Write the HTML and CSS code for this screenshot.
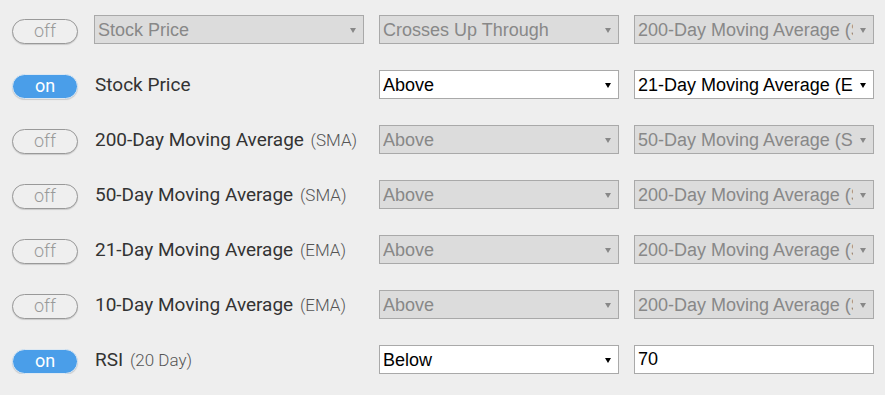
FILE: index.html
```html
<!DOCTYPE html>
<html lang="en">
<head>
    <meta charset="UTF-8">
    <title>Screener rules</title>
    <link rel="stylesheet" href="styles.css">
</head>
<body>
    <div class="rules">
        <div class="rule">
            <button class="toggle">off</button>
            <div class="pick"><select disabled><option>Stock Price</option></select></div>
            <div class="pick"><select disabled><option>Crosses Up Through</option></select></div>
            <div class="pick"><select disabled><option>200-Day Moving Average (SMA)</option></select></div>
        </div>

        <div class="rule">
            <button class="toggle on">on</button>
            <div class="label">Stock Price</div>
            <div class="pick"><select><option>Above</option></select></div>
            <div class="pick"><select><option>21-Day Moving Average (EMA)</option></select></div>
        </div>

        <div class="rule">
            <button class="toggle">off</button>
            <div class="label">200-Day Moving Average <span class="note">(SMA)</span></div>
            <div class="pick"><select disabled><option>Above</option></select></div>
            <div class="pick"><select disabled><option>50-Day Moving Average (SMA)</option></select></div>
        </div>

        <div class="rule">
            <button class="toggle">off</button>
            <div class="label">50-Day Moving Average <span class="note">(SMA)</span></div>
            <div class="pick"><select disabled><option>Above</option></select></div>
            <div class="pick"><select disabled><option>200-Day Moving Average (SMA)</option></select></div>
        </div>

        <div class="rule">
            <button class="toggle">off</button>
            <div class="label">21-Day Moving Average <span class="note">(EMA)</span></div>
            <div class="pick"><select disabled><option>Above</option></select></div>
            <div class="pick"><select disabled><option>200-Day Moving Average (SMA)</option></select></div>
        </div>

        <div class="rule">
            <button class="toggle">off</button>
            <div class="label">10-Day Moving Average <span class="note">(EMA)</span></div>
            <div class="pick"><select disabled><option>Above</option></select></div>
            <div class="pick"><select disabled><option>200-Day Moving Average (SMA)</option></select></div>
        </div>

        <div class="rule">
            <button class="toggle on">on</button>
            <div class="label">RSI <span class="note">(20 Day)</span></div>
            <div class="pick"><select><option>Below</option></select></div>
            <input class="value" type="text" value="70">
        </div>
    </div>
</body>
</html>
```

FILE: styles.css
```css
* {
    box-sizing: border-box;
    margin: 0;
    padding: 0;
}

body {
    background: #eeeeee;
    font-family: Roboto, "Liberation Sans", sans-serif;
    color: #333;
}

.rules {
    display: flex;
    flex-direction: column;
    gap: 26px;
    padding: 15px 11px 0 12px;
}

.rule {
    display: grid;
    grid-template-columns: 67px 270px 240px 240px;
    column-gap: 15px;
    align-items: center;
    height: 29px;
}

.toggle {
    width: 66px;
    height: 25px;
    margin-top: 3px;
    border-radius: 13px;
    border: 1px solid #999;
    background: #efefef;
    color: #999;
    font-family: Roboto, sans-serif;
    font-weight: 300;
    font-size: 18px;
    line-height: 22px;
    box-shadow: 0 1px 1px rgba(0,0,0,0.15);
}

.toggle.on {
    background: #4a9ee9;
    border-color: #dde8f2;
    color: white;
    font-weight: 400;
}

.label {
    font-size: 19px;
    color: #333;
    white-space: nowrap;
    padding-left: 1px;
}

.note {
    font-size: 17px;
    font-weight: 300;
    color: #555;
    margin-left: 2px;
}

.pick {
    position: relative;
    height: 29px;
}

.pick::after {
    content: "";
    position: absolute;
    right: 8px;
    top: 13px;
    border-left: 3px solid transparent;
    border-right: 3px solid transparent;
    border-top: 5px solid #000;
    pointer-events: none;
}

.pick:has(select:disabled)::after {
    border-top-color: #888;
}

select, .value {
    appearance: none;
    width: 100%;
    height: 29px;
    border: 1px solid #a9a9a9;
    background: white;
    color: #000;
    font-family: "Liberation Sans", Arial, sans-serif;
    font-size: 18px;
    padding: 0 20px 0 3px;
    border-radius: 0;
    outline: none;
}

select:disabled {
    background: #dcdcdc;
    color: #888;
    opacity: 1;
}
```
